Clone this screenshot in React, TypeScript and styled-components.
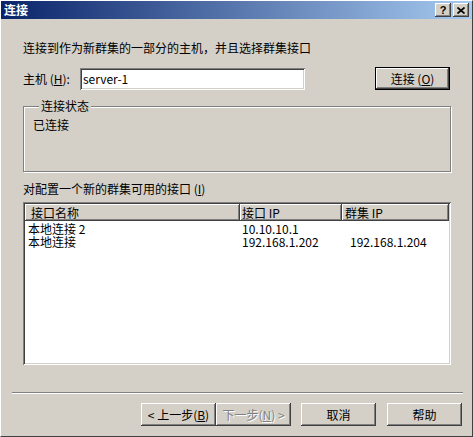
import React from "react";
import styled, { createGlobalStyle } from "styled-components";

const GlobalStyle = createGlobalStyle`
  body {
    margin: 0;
    background: #d4d0c8;
    font-family: "Noto Sans CJK SC", "Liberation Sans", sans-serif;
    font-size: 12px;
    color: #000;
  }
`;

const raised = `
  box-shadow: inset -1px -1px #404040, inset 1px 1px #fff, inset -2px -2px #808080, inset 2px 2px #d4d0c8;
`;

const sunken = `
  box-shadow: inset 1px 1px #808080, inset -1px -1px #fff, inset 2px 2px #404040, inset -2px -2px #d4d0c8;
`;

const Window = styled.div`
  width: 473px;
  height: 437px;
  box-sizing: border-box;
  background: #d4d0c8;
  border-top: 1px solid #fff;
  border-left: 1px solid #fff;
  border-right: 1px solid #404040;
  border-bottom: 1px solid #404040;
  display: flex;
  flex-direction: column;
`;

const TitleBar = styled.div`
  height: 18px;
  flex: none;
  display: flex;
  align-items: center;
  padding: 0 3px 0 3px;
  background: linear-gradient(to right, #0a246a, #a6caf0);
`;

const TitleText = styled.span`
  flex: 1;
  color: #fff;
  font-weight: bold;
  line-height: 18px;
`;

const TitleButton = styled.button`
  width: 16px;
  height: 14px;
  padding: 0;
  margin-left: 2px;
  border: none;
  background: #d4d0c8;
  display: flex;
  align-items: center;
  justify-content: center;
  font: bold 11px "Liberation Sans", sans-serif;
  color: #000;
  ${raised}
`;

const Body = styled.div`
  flex: 1;
  display: flex;
  flex-direction: column;
  padding: 22px 21px 0 22px;
`;

const Text = styled.div<{ $gap?: number }>`
  line-height: 14px;
  margin-top: ${(p) => p.$gap ?? 0}px;
`;

const HostRow = styled.div`
  display: flex;
  align-items: center;
  margin-top: 12px;
  height: 23px;
`;

const HostLabel = styled.label`
  width: 57px;
  line-height: 14px;
`;

const HostInput = styled.input`
  width: 225px;
  height: 22px;
  box-sizing: border-box;
  border: none;
  outline: none;
  padding: 0 3px;
  font: inherit;
  background: #fff;
  ${sunken}
`;

const Spacer = styled.div`
  flex: 1;
`;

const Button = styled.button<{ $default?: boolean; $gap?: number }>`
  width: 75px;
  height: 23px;
  padding: 0;
  border: none;
  background: #d4d0c8;
  font: inherit;
  line-height: 14px;
  color: #000;
  margin-left: ${(p) => p.$gap ?? 0}px;
  ${(p) =>
    p.$default
      ? `box-shadow: inset 0 0 0 1px #000, inset -2px -2px #404040, inset 2px 2px #fff, inset -3px -3px #808080;`
      : raised}
  &:disabled {
    color: #808080;
    text-shadow: 1px 1px #fff;
  }
`;

const GroupBox = styled.fieldset`
  margin: 9px 0 0 0;
  padding: 5px 9px 0 9px;
  height: 73px;
  box-sizing: border-box;
  border: 1px solid #808080;
  box-shadow: inset 1px 1px #fff, 1px 1px #fff;
  min-inline-size: 0;
`;

const Legend = styled.legend`
  margin-left: 6px;
  padding: 0 2px;
  line-height: 14px;
  background: #d4d0c8;
`;

const ListView = styled.div`
  margin-top: 6px;
  height: 163px;
  box-sizing: border-box;
  padding: 2px;
  background: #fff;
  ${sunken}
`;

const Columns = styled.div`
  display: grid;
  grid-template-columns: 215px 102px 107px;
`;

const HeaderCell = styled.div<{ $pad: number }>`
  height: 17px;
  line-height: 17px;
  padding-left: ${(p) => p.$pad}px;
  background: #d4d0c8;
  ${raised}
`;

const Rows = styled.div`
  padding-top: 1px;
`;

const Cell = styled.div<{ $pad: number }>`
  line-height: 13px;
  padding-left: ${(p) => p.$pad}px;
  white-space: pre;
`;

const Footer = styled.div`
  padding: 0 9px 10px 11px;
`;

const Separator = styled.div`
  height: 1px;
  border-top: 1px solid #808080;
  border-bottom: 1px solid #fff;
  box-sizing: content-box;
  height: 0;
`;

const ButtonRow = styled.div`
  display: flex;
  justify-content: flex-end;
  margin-top: 9px;
  padding-right: 1px;
`;

const headers = [
  { label: "接口名称", pad: 6 },
  { label: "接口 IP", pad: 2 },
  { label: "群集 IP", pad: 3 },
];

const interfaces = [
  { name: "本地连接 2", ip: "10.10.10.1", cluster: "" },
  { name: "本地连接", ip: "192.168.1.202", cluster: "192.168.1.204" },
];

export default function App() {
  return (
    <>
      <GlobalStyle />
      <Window>
        <TitleBar>
          <TitleText>连接</TitleText>
          <TitleButton>?</TitleButton>
          <TitleButton>
            <svg width="8" height="7" viewBox="0 0 8 7">
              <path d="M0.5 0.5 L7.5 6.5 M7.5 0.5 L0.5 6.5" stroke="#000" strokeWidth="1.7" />
            </svg>
          </TitleButton>
        </TitleBar>
        <Body>
          <Text>连接到作为新群集的一部分的主机，并且选择群集接口</Text>
          <HostRow>
            <HostLabel>
              主机 (<u>H</u>):
            </HostLabel>
            <HostInput defaultValue="server-1" />
            <Spacer />
            <Button $default style={{ marginRight: 1 }}>
              连接 (<u>O</u>)
            </Button>
          </HostRow>
          <GroupBox>
            <Legend>连接状态</Legend>
            <Text>已连接</Text>
          </GroupBox>
          <Text $gap={10}>
            对配置一个新的群集可用的接口 (<u>I</u>)
          </Text>
          <ListView>
            <Columns>
              {headers.map((h) => (
                <HeaderCell key={h.label} $pad={h.pad}>
                  {h.label}
                </HeaderCell>
              ))}
            </Columns>
            <Rows>
              {interfaces.map((row) => (
                <Columns key={row.name}>
                  <Cell $pad={3}>{row.name}</Cell>
                  <Cell $pad={2}>{row.ip}</Cell>
                  <Cell $pad={8}>{row.cluster}</Cell>
                </Columns>
              ))}
            </Rows>
          </ListView>
        </Body>
        <Footer>
          <Separator />
          <ButtonRow>
            <Button>
              &lt; 上一步(<u>B</u>)
            </Button>
            <Button disabled>
              下一步(<u>N</u>) &gt;
            </Button>
            <Button $gap={10}>取消</Button>
            <Button $gap={11}>帮助</Button>
          </ButtonRow>
        </Footer>
      </Window>
    </>
  );
}
